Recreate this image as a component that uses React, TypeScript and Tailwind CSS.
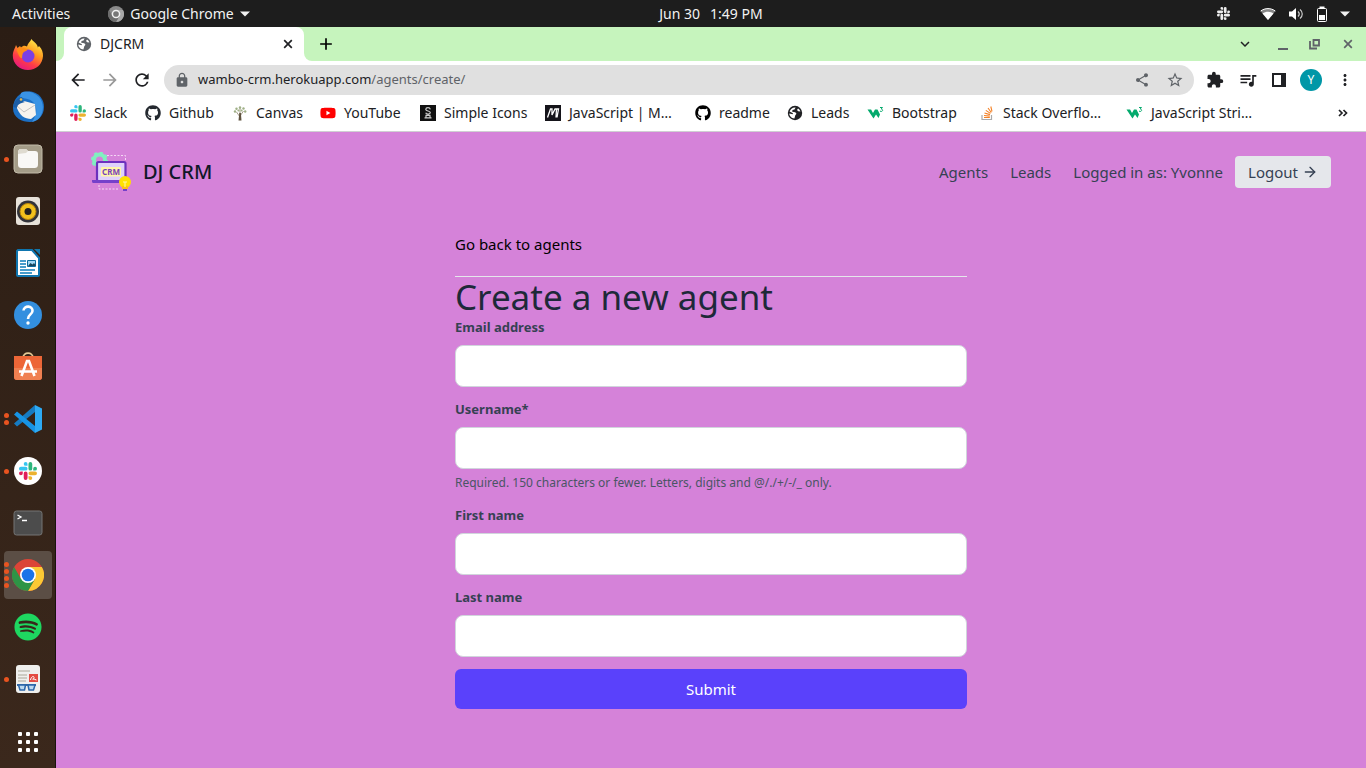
import type { ReactNode } from "react";
import { FiArrowRight } from "react-icons/fi";
import { FaGithub, FaSpotify, FaYoutube } from "react-icons/fa";
import {
  MdAdd, MdArrowBack, MdArrowForward, MdRefresh, MdLock, MdShare, MdStarBorder,
  MdExtension, MdQueueMusic, MdMoreVert, MdKeyboardArrowDown,
} from "react-icons/md";

const slackPath =
  "M5.042 15.165a2.528 2.528 0 0 1-2.52 2.523A2.528 2.528 0 0 1 0 15.165a2.527 2.527 0 0 1 2.522-2.52h2.52v2.52zM6.313 15.165a2.527 2.527 0 0 1 2.521-2.52 2.527 2.527 0 0 1 2.521 2.52v6.313A2.528 2.528 0 0 1 8.834 24a2.528 2.528 0 0 1-2.521-2.522v-6.313z";

function Slack({ className, mono }: { className: string; mono?: boolean }) {
  const fills = mono ? ["#eee", "#eee", "#eee", "#eee"] : ["#e01e5a", "#36c5f0", "#2eb67d", "#ecb22e"];
  return (
    <svg viewBox="0 0 24 24" className={className} aria-hidden="true">
      {fills.map((f, i) => (
        <path key={i} d={slackPath} fill={f} transform={`rotate(${i * 90} 12 12)`} />
      ))}
    </svg>
  );
}

function Chrome({ className }: { className: string }) {
  return (
    <svg viewBox="0 0 48 48" className={className} aria-hidden="true">
      <circle cx="24" cy="24" r="24" fill="#db4437" />
      <path d="M24 12H44.800A24 24 0 0 1 24 48L34.400 30Z" fill="#fcc934" />
      <path d="M3.200 12A24 24 0 0 0 24 48L34.400 30H13.600Z" fill="#2e9446" />
      <circle cx="24" cy="24" r="12" fill="#fff" />
      <circle cx="24" cy="24" r="9.500" fill="#1a73e8" />
    </svg>
  );
}

function ChromeGray() {
  return (
    <svg viewBox="0 0 48 48" className="size-4" aria-hidden="true">
      <circle cx="24" cy="24" r="24" fill="#8a8a8a" />
      <path d="M24 12H44.800A24 24 0 0 1 24 48L34.400 30Z" fill="#a8a8a8" />
      <path d="M3.200 12A24 24 0 0 0 24 48L34.400 30H13.600Z" fill="#6d6d6d" />
      <circle cx="24" cy="24" r="13" fill="#f2f2f2" />
      <circle cx="24" cy="24" r="8.500" fill="#777" />
    </svg>
  );
}

function Globe({ className }: { className: string }) {
  return (
    <svg viewBox="0 0 16 16" className={className} aria-hidden="true">
      <circle cx="8" cy="8" r="7.200" fill="currentColor" />
      <path d="M8.600 2.500 7.500 4.500 5.500 5 5.200 6.800 8.300 7.200 9.500 8.800 8.300 10.200 7.400 13.600C4.400 13.400 2.300 11 2.300 8.600L5.600 9.200 6 8.200 2.600 6.600C3.300 4 5.500 2.300 8.600 2.500ZM11 3.400 10 5 11.200 6.200 13.400 6.400C13 5 12.200 4 11 3.400Z" fill="#fff" />
    </svg>
  );
}

function Cross({ className }: { className: string }) {
  return (
    <svg viewBox="0 0 10 10" className={className} aria-hidden="true">
      <path d="m1.200 1.200 7.600 7.600M8.800 1.200 1.200 8.800" stroke="currentColor" strokeWidth="1.700" />
    </svg>
  );
}

function Caret() {
  return <svg viewBox="0 0 10 6" className="h-1.5 w-2.5" aria-hidden="true"><path d="M0 .5h10l-5 5z" fill="currentColor" /></svg>;
}

function Tree() {
  return (
    <svg viewBox="0 0 16 16" className="size-4" aria-hidden="true">
      <path d="M8 12 4.500 7M8 11l3.500-5M8 9V3" stroke="#8b8068" strokeWidth=".8" fill="none" />
      <path d="M6.500 15.500 7.300 8h1.600l.6 7.500z" fill="#5d513d" />
      <g fill="#9fb086">
        <circle cx="3" cy="6.500" r="1.200" /><circle cx="4.500" cy="3.800" r="1.200" /><circle cx="8" cy="2.500" r="1.200" />
        <circle cx="11.500" cy="3.500" r="1.200" /><circle cx="13.200" cy="6.500" r="1.200" /><circle cx="6.400" cy="5.500" r="1" /><circle cx="9.600" cy="5.500" r="1" />
      </g>
    </svg>
  );
}

function SimpleIconsMark() {
  return (
    <svg viewBox="0 0 16 16" className="size-4" aria-hidden="true">
      <rect width="16" height="16" fill="#111" />
      <path d="M10.300 4.400C9.800 2 6 2 5.800 4.400c0 2 4.500 1.200 4.500 3.200 0 2-4 2-4.600.2M5.500 10.300h5M4.500 12.800h7M6 10.300v2.500M10 10.300v2.500" fill="none" stroke="#ccc" strokeWidth="1.200" />
    </svg>
  );
}

function MdnMark() {
  return (
    <svg viewBox="0 0 16 16" className="size-4" aria-hidden="true">
      <rect width="16" height="16" fill="#15141a" />
      <path d="M2.500 12.500 5.500 4H7v6l3-6h1.500L11 12.500M11.500 4h2L12 12.500" fill="none" stroke="#fff" strokeWidth="1.300" />
    </svg>
  );
}

function W3Mark() {
  return (
    <svg viewBox="0 0 17 16" className="h-4 w-[17px]" aria-hidden="true">
      <path d="M.5 4.500h3.600L6 8l2-3.500h2.500L13 9.500 11.500 13 9 9.500 6.500 13.500z" fill="#04aa6d" />
      <path d="M13 2.500h2.500L14.200 4c2 .2 1.800 2.500-.2 2.500l-1-.5" fill="none" stroke="#04aa6d" />
    </svg>
  );
}

function StackMark() {
  return (
    <svg viewBox="0 0 16 16" className="size-4" aria-hidden="true">
      <path d="M3 10v4.500h9.500V10" fill="none" stroke="#aaa" strokeWidth="1.200" />
      <path d="M5 12.500h5.800M5 10.500l5.800.6M5.500 8l5.500 1.600M6.800 5.400l4.700 3M9 3l3.300 4.500M11.800 1.500l1.200 5" stroke="#f48024" strokeWidth="1.100" />
    </svg>
  );
}

const bookmarks: { label: string; icon: ReactNode; width: string }[] = [
  { label: "Slack", icon: <Slack className="size-4" />, width: "w-[75px]" },
  { label: "Github", icon: <FaGithub className="size-4 text-[#24292f]" />, width: "w-[87px]" },
  { label: "Canvas", icon: <Tree />, width: "w-[88px]" },
  { label: "YouTube", icon: <FaYoutube className="size-4 text-[#f00]" />, width: "w-[100px]" },
  { label: "Simple Icons", icon: <SimpleIconsMark />, width: "w-[125px]" },
  { label: "JavaScript | M…", icon: <MdnMark />, width: "w-[150px]" },
  { label: "readme", icon: <FaGithub className="size-4 text-black" />, width: "w-[92px]" },
  { label: "Leads", icon: <Globe className="size-4 text-[#202124]" />, width: "w-[80px]" },
  { label: "Bootstrap", icon: <W3Mark />, width: "w-[112px]" },
  { label: "Stack Overflo…", icon: <StackMark />, width: "w-[147px]" },
  { label: "JavaScript Stri…", icon: <W3Mark />, width: "w-[145px]" },
];

function Svg({ children }: { children: ReactNode }) {
  return <svg viewBox="0 0 32 32" className="size-8" aria-hidden="true">{children}</svg>;
}

const Firefox = () => (
  <Svg>
    <defs>
      <linearGradient id="ff" x1=".8" y1="0" x2=".25" y2="1">
        <stop offset="0" stopColor="#fff44f" /><stop offset=".4" stopColor="#ff9a1f" /><stop offset=".7" stopColor="#ff3b47" /><stop offset="1" stopColor="#e31587" />
      </linearGradient>
    </defs>
    <path d="M19.500 0c1 2 4 3.200 5.500 6 .5 1 .8 1.500.8 2.500l1.200-1.500c3 3 4.200 6.500 4 10C30.500 25.500 24 31 16 31S.6 25 .8 16.500C1 11.500 3 9.500 4 6l1.500 3L8 7l1 1.500c2-2 4-2 6-1C16 4 18 3 19.500 0z" fill="url(#ff)" />
    <circle cx="16" cy="17" r="6.500" fill="#7b3fe4" />
    <path d="M4.500 11c3-2.500 6-3 11-.5-1 2-3.500 1.800-4.500 3.500-1.500 3 0 6-2 5-2-1-3-5-4.500-8z" fill="#ff8b16" />
  </Svg>
);

const Thunderbird = () => (
  <Svg>
    <path d="M3 9C7 2 14-.5 21 1c7 2 11 8 11 15 0 9-7 15-14 15C10 31 1 27 1 17c0-3 1-6 2-8z" fill="#1c6fc4" />
    <path d="M9 2c5-3 13-1 18 4 5 6 5 14 1 20-2 3-5 4-8 5 5-7 6-15 1-20C17 7 12 8 8 6z" fill="#3a93e4" />
    <path d="M4 14 12 10l11 3 1 11-5 4C13 28 7 25 4 14z" fill="#f7f3ee" />
    <path d="m5 15 7 6 11-7" fill="none" stroke="#c5c3c1" />
    <path d="M1 16c1-6 4-9 9-10 1 3-1 4 3 5-5 1-8 3-8 6z" fill="#1b5da6" />
    <circle cx="9" cy="8.500" r="1.300" fill="#e5ba4b" />
  </Svg>
);

const Files = () => (
  <Svg>
    <rect x="2" y="2" width="28" height="28" rx="4" fill="#a49c88" stroke="#c2bba9" />
    <path d="M6 10c0-3 1-4 3-4h5l2 2h7c2 0 3 1 3 3v10c0 3-1 4-4 4H10c-3 0-4-1-4-4z" fill="#f9f8f6" />
    <path d="M6 11c0-4 1-5 3-5h5l2 2-2 2z" fill="#dfdbd0" />
  </Svg>
);

const Rhythmbox = () => (
  <Svg>
    <rect x="4" y="2" width="24" height="28" rx="3" fill="#e7e2da" />
    <circle cx="16" cy="16.500" r="11" fill="#32333a" />
    <circle cx="16" cy="16.500" r="8" fill="#f2c11d" stroke="#b9860b" />
    <circle cx="16" cy="16.500" r="3.500" fill="#222" />
  </Svg>
);

const Writer = () => (
  <Svg>
    <path d="M6 3h14l7 8v17a1 1 0 0 1-1 1H6a1 1 0 0 1-1-1V4z" fill="#fff" stroke="#0e75af" strokeWidth="2" />
    <path d="M22 2h6v6z" fill="#1377ab" />
    <path d="M8 14h6M8 17h6M8 20h6M8 23h15M8 26h12" stroke="#0b7cba" strokeWidth="1.400" />
    <path d="M15.500 13.500h8v6h-8z" fill="#9fd5f2" stroke="#0b6a9d" />
    <path d="m16 19 2.500-3 2 1.500 1.500-1.500 1.500 2v1z" fill="#1a455c" />
  </Svg>
);

const Help = () => (
  <Svg>
    <circle cx="16" cy="16" r="14" fill="#338fdf" />
    <path d="M11.500 11.500C12 6 21 6.500 20.500 12c-.3 3.500-4.500 3.500-4.500 8" fill="none" stroke="#fff" strokeWidth="2.600" />
    <circle cx="16" cy="24" r="1.700" fill="#fff" />
  </Svg>
);

const Software = () => (
  <Svg>
    <path d="M11 7C11 .5 21 .5 21 7" fill="none" stroke="#e6c994" strokeWidth="1.800" />
    <path d="M2 5h28v21a3 3 0 0 1-3 3H5a3 3 0 0 1-3-3z" fill="#ed6637" />
    <path d="M2 17h28v9a3 3 0 0 1-3 3H5a3 3 0 0 1-3-3z" fill="#f08051" />
    <path d="m9.500 25 5.500-15h2l5.500 15M7 20.500h18" fill="none" stroke="#fff" strokeWidth="2.600" />
  </Svg>
);

const VsCode = () => (
  <Svg>
    <path d="m2 20.500 3 3L23 9V2z" fill="#167bc2" />
    <path d="m2 11.500 3-3L23 23v7z" fill="#1794e5" />
    <path d="m23 2 7 3.500v21L23 30z" fill="#2daaf4" />
  </Svg>
);

const SlackRound = () => (
  <span className="flex size-7 items-center justify-center rounded-full bg-white"><Slack className="size-[18px]" /></span>
);

const Terminal = () => (
  <Svg>
    <rect x="2" y="4" width="28" height="24" rx="2.500" fill="#4c4c4c" stroke="#747474" />
    <path d="m5.500 8 3.500 2-3.500 2M10 13.500h5" fill="none" stroke="#fff" strokeWidth="1.300" />
  </Svg>
);

const Reader = () => (
  <Svg>
    <rect x="4" y="2" width="24" height="28" rx="3" fill="#efefed" />
    <path d="M6 8h12M6 12h9M6 15h9M6 18h8" stroke="#aaa798" />
    <path d="M17 11h9v8h-9z" fill="#e34b42" />
    <path d="M18.500 17c1-5 5-4 3-1-1 1-2-1 3 1" fill="none" stroke="#fff" />
    <path d="M5 22h19" stroke="#3668a6" strokeWidth="2" />
    <path d="M6.500 22h7l-1 5h-4.500zM16 22h7l-1.500 5H17z" fill="#bcd9ef" stroke="#2c67aa" strokeWidth="1.500" strokeLinejoin="round" />
  </Svg>
);

const launchers: { name: string; icon: ReactNode; dots: number; active?: boolean }[] = [
  { name: "Firefox", icon: <Firefox />, dots: 0 },
  { name: "Thunderbird", icon: <Thunderbird />, dots: 0 },
  { name: "Files", icon: <Files />, dots: 1 },
  { name: "Rhythmbox", icon: <Rhythmbox />, dots: 0 },
  { name: "Writer", icon: <Writer />, dots: 0 },
  { name: "Help", icon: <Help />, dots: 0 },
  { name: "Software", icon: <Software />, dots: 0 },
  { name: "VS Code", icon: <VsCode />, dots: 2 },
  { name: "Slack", icon: <SlackRound />, dots: 1 },
  { name: "Terminal", icon: <Terminal />, dots: 0 },
  { name: "Chrome", icon: <Chrome className="size-8" />, dots: 4, active: true },
  { name: "Spotify", icon: <FaSpotify className="size-7 text-[#1ed760]" />, dots: 0 },
  { name: "Document reader", icon: <Reader />, dots: 1 },
];

function TopBar() {
  return (
    <header className="grid h-[27px] shrink-0 grid-cols-3 items-center bg-[#1d1d1d] px-3 text-sm text-[#f2f2f2]">
      <div className="flex items-center gap-[38px]">
        <button type="button">Activities</button>
        <button type="button" className="flex items-center gap-1.5">
          <ChromeGray />
          <span>Google Chrome</span>
          <Caret />
        </button>
      </div>
      <div className="flex justify-center gap-2.5 pl-14"><span>Jun 30</span><span>1:49 PM</span></div>
      <div className="flex items-center justify-end gap-3 pr-1">
        <Slack mono className="mr-[18px] size-[13px]" />
        <svg viewBox="0 0 16 12" className="h-3 w-4" aria-hidden="true">
          <path d="M.5 3C5-.3 11-.3 15.500 3L8 12z" fill="#888" />
          <path d="M2.500 5.500c3.500-2.300 7.500-2.300 11 0L8 12z" fill="#fff" />
          <path d="M.7 3C5-.2 11-.2 15.300 3" stroke="#fff" fill="none" />
        </svg>
        <svg viewBox="0 0 16 14" className="h-3.5 w-4" aria-hidden="true">
          <path d="M1 4.500h3L8 1v12L4 9.500H1z" fill="#fff" />
          <path d="M10 4.500c1.500 1.500 1.500 3.500 0 5M12 2.500c3 2.500 3 6.500 0 9" fill="none" stroke="#ccc" strokeWidth="1.200" />
        </svg>
        <svg viewBox="0 0 12 16" className="h-4 w-3" aria-hidden="true">
          <path d="M3.500.5h5v2h-5z" fill="#fff" /><rect x="1.500" y="2.500" width="9" height="13" rx="1" fill="none" stroke="#fff" /><path d="M3 9h6v5H3z" fill="#fff" />
        </svg>
        <Caret />
      </div>
    </header>
  );
}

function Dock() {
  return (
    <nav aria-label="Applications" className="flex w-14 shrink-0 flex-col items-center gap-1 border-r border-[#1a120d] bg-linear-to-b from-[#2b1d14] to-[#3b281c] pt-1">
      {launchers.map((l) => (
        <button key={l.name} type="button" aria-label={l.name} className={`relative flex h-12 w-12 shrink-0 items-center justify-center rounded-sm ${l.active ? "bg-[#5b4e45]" : ""}`}>
          <span className="absolute inset-y-0 left-0 flex flex-col justify-center gap-0.5">
            {Array.from({ length: l.dots }, (_, i) => <span key={i} className="size-[5px] rounded-full bg-[#e95420]" />)}
          </span>
          {l.icon}
        </button>
      ))}
      <button type="button" aria-label="Show applications" className="mt-auto mb-4 grid grid-cols-3 gap-1">
        {Array.from({ length: 9 }, (_, i) => <span key={i} className="size-1 rounded-[1px] bg-white" />)}
      </button>
    </nav>
  );
}

function TabStrip() {
  return (
    <div className="flex h-[34px] shrink-0 items-center bg-[#c6f4bd]">
      <div className="h-full w-2 bg-white"><span className="block h-full rounded-br-lg bg-[#c6f4bd]" /></div>
      <div className="h-full w-60 bg-[#c6f4bd]">
        <div className="flex h-full items-center gap-2 rounded-t-lg bg-white pr-[11px] pl-3 text-sm text-[#202124]">
          <Globe className="size-4 text-[#5f6368]" />
          <span className="flex-1">DJCRM</span>
          <button type="button" aria-label="Close tab"><Cross className="size-2.5" /></button>
        </div>
      </div>
      <div className="h-full w-2 bg-white"><span className="block h-full rounded-bl-lg bg-[#c6f4bd]" /></div>
      <button type="button" aria-label="New tab" className="ml-1"><MdAdd className="size-5" /></button>
      <div className="ml-auto flex items-center pr-[13px] text-[#5f6368]">
        <button type="button" aria-label="Search tabs" className="mr-6 text-[#202124]"><MdKeyboardArrowDown className="size-[18px]" /></button>
        <button type="button" aria-label="Minimize" className="mr-[21px] h-3 w-2.5 border-b-2 border-[#5f6368]" />
        <button type="button" aria-label="Restore" className="mr-[22px]">
          <svg viewBox="0 0 12 12" className="size-3"><path d="M1 3v7.500h7M4.500 2H10v5.500H4.500z" fill="none" stroke="currentColor" strokeWidth="1.800" /></svg>
        </button>
        <button type="button" aria-label="Close"><Cross className="size-2.5" /></button>
      </div>
    </div>
  );
}

function Toolbar() {
  return (
    <div className="flex h-[38px] shrink-0 items-center bg-white px-3 text-[#202124]">
      <button type="button" aria-label="Back" className="mr-3"><MdArrowBack className="size-5" /></button>
      <button type="button" aria-label="Forward" className="mr-3 text-[#999]"><MdArrowForward className="size-5" /></button>
      <button type="button" aria-label="Reload" className="mr-3"><MdRefresh className="size-5" /></button>
      <div className="flex h-[30px] flex-1 items-center rounded-full bg-[#e0e0e0] px-2.5 text-[13px] text-[#5f6368]">
        <MdLock className="mr-2 size-4" />
        <span className="flex-1"><span className="text-[#202124]">wambo-crm.herokuapp.com</span>/agents/create/</span>
        <button type="button" aria-label="Share" className="mr-4"><MdShare className="size-4" /></button>
        <button type="button" aria-label="Bookmark"><MdStarBorder className="size-[18px]" /></button>
      </div>
      <button type="button" aria-label="Extensions" className="ml-3"><MdExtension className="size-[18px]" /></button>
      <button type="button" aria-label="Media" className="ml-3.5"><MdQueueMusic className="size-5" /></button>
      <button type="button" aria-label="Side panel" className="ml-3.5 flex h-3.5 w-3.5 border-2 border-r-[5px] border-[#202124]" />
      <button type="button" aria-label="Profile" className="ml-3.5 flex size-[22px] items-center justify-center rounded-full bg-[#0097a7] text-xs text-white">Y</button>
      <button type="button" aria-label="Menu" className="ml-3.5"><MdMoreVert className="size-[18px]" /></button>
    </div>
  );
}

function Bookmarks() {
  return (
    <div className="flex h-[33px] shrink-0 items-center border-b border-[#d0cfd2] bg-white px-[18px] pb-1 pl-3.5 text-sm text-[#202124]">
      {bookmarks.map((b) => (
        <a key={b.label} href="#" className={`flex shrink-0 items-center gap-2 whitespace-nowrap ${b.width}`}>{b.icon}{b.label}</a>
      ))}
      <button type="button" aria-label="More bookmarks" className="ml-auto">
        <svg viewBox="0 0 10 8" className="h-2 w-2.5"><path d="m1 1 3 3-3 3M5.500 1l3 3-3 3" fill="none" stroke="currentColor" strokeWidth="1.700" /></svg>
      </button>
    </div>
  );
}

function CrmLogo() {
  return (
    <svg viewBox="0 0 40 40" className="size-10" aria-hidden="true">
      <path d="M16 3.500h18.500V8M8 33v4h19" fill="none" stroke="#f5d9f5" strokeDasharray="2 1.500" />
      <circle cx="8.500" cy="8" r="5.500" fill="none" stroke="#80f0c0" strokeWidth="4" />
      <circle cx="8.500" cy="8" r="7.500" fill="none" stroke="#80f0c0" strokeWidth="2" strokeDasharray="3 2.890" />
      <rect x="6" y="10" width="28.500" height="19" rx="1.500" fill="#dfd1fb" stroke="#6c31bd" strokeWidth="2.200" />
      <path d="M1 28h35v1.500a1.500 1.500 0 0 1-1.500 1.500h-32A1.500 1.500 0 0 1 1 29.500z" fill="#7540ca" />
      <rect x="10" y="15" width="20" height="9.500" rx="1" fill="#fff6a9" />
      <text x="20" y="22.700" textAnchor="middle" fontSize="8" fontWeight="700" fill="#7942b8">CRM</text>
      <circle cx="34" cy="30" r="6" fill="#ffe100" />
      <path d="M31 34h6v3h-6z" fill="#fbc116" /><path d="M32 30h4M34 30v5" stroke="#fff6a9" /><path d="M32 37h4v2h-4z" fill="#7540ca" />
    </svg>
  );
}

const fields = [
  { id: "email", label: "Email address", type: "email", help: "" },
  { id: "username", label: "Username*", type: "text", help: "Required. 150 characters or fewer. Letters, digits and @/./+/-/_ only." },
  { id: "first", label: "First name", type: "text", help: "" },
  { id: "last", label: "Last name", type: "text", help: "" },
];

function Page() {
  return (
    <main className="flex-1 bg-[#d582d9] px-[35px] pt-5 text-[15px] text-gray-700">
      <nav className="flex h-10 items-center">
        <a href="#" className="flex items-center gap-3 text-xl font-medium text-gray-900"><CrmLogo />DJ CRM</a>
        <div className="ml-auto flex items-center">
          <a href="#" className="mr-[22px]">Agents</a>
          <a href="#" className="mr-[22px]">Leads</a>
          <span className="mr-3">Logged in as: Yvonne</span>
          <a href="#" className="flex h-8 w-24 items-center justify-center gap-1 rounded-sm bg-gray-200">Logout<FiArrowRight className="size-4" /></a>
        </div>
      </nav>
      <section className="mx-auto mt-10 max-w-lg">
        <a href="#" className="block leading-6 text-black">Go back to agents</a>
        <form className="mt-5 border-t border-gray-200" onSubmit={(e) => e.preventDefault()}>
          <h1 className="text-[35px] leading-10 text-gray-800">Create a new agent</h1>
          {fields.map((f) => (
            <div key={f.id} className="mb-3">
              <label htmlFor={f.id} className="mb-2 block text-[13px] leading-5 font-bold">{f.label}</label>
              <input id={f.id} type={f.type} className="block h-[42px] w-full rounded-lg border border-gray-300 bg-white px-4 outline-none" />
              {f.help && <small className="mt-1 block text-xs leading-5 text-gray-600">{f.help}</small>}
            </div>
          ))}
          <button type="submit" className="h-10 w-full rounded-md bg-[#5a41fb] text-white">Submit</button>
        </form>
      </section>
    </main>
  );
}

export default function App() {
  return (
    <div className="flex min-h-screen flex-col font-['Noto_Sans',sans-serif]">
      <TopBar />
      <div className="flex flex-1">
        <Dock />
        <div className="flex min-w-0 flex-1 flex-col">
          <TabStrip />
          <Toolbar />
          <Bookmarks />
          <Page />
        </div>
      </div>
    </div>
  );
}
